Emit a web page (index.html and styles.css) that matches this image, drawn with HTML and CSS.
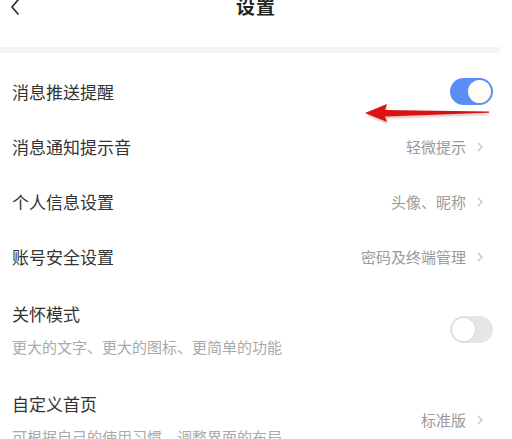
FILE: index.html
```html
<!DOCTYPE html>
<html lang="zh-CN">

<head>
    <meta charset="UTF-8">
    <meta name="viewport" content="width=device-width, initial-scale=1.0">
    <title>设置</title>
    <link rel="stylesheet" href="styles.css">
</head>

<body>
    <div class="page">
        <div class="header">
            <svg class="back" width="10" height="16" viewBox="0 0 10 16">
                <polyline points="8,1 2,8 8,15" fill="none" stroke="#333" stroke-width="1.8" stroke-linecap="round" stroke-linejoin="round"/>
            </svg>
            <div class="title">设置</div>
        </div>
        <div class="divider"></div>

        <div class="list">
            <div class="row">
                <div class="name">消息推送提醒</div>
                <div class="switch on"><span class="knob"></span></div>
            </div>
            <div class="row">
                <div class="name">消息通知提示音</div>
                <div class="value">轻微提示<svg class="arrow-r" width="6" height="10" viewBox="0 0 6 10"><polyline points="1,1 5,5 1,9" fill="none" stroke="#c4c4c4" stroke-width="1.4"/></svg></div>
            </div>
            <div class="row">
                <div class="name">个人信息设置</div>
                <div class="value">头像、昵称<svg class="arrow-r" width="6" height="10" viewBox="0 0 6 10"><polyline points="1,1 5,5 1,9" fill="none" stroke="#c4c4c4" stroke-width="1.4"/></svg></div>
            </div>
            <div class="row">
                <div class="name">账号安全设置</div>
                <div class="value">密码及终端管理<svg class="arrow-r" width="6" height="10" viewBox="0 0 6 10"><polyline points="1,1 5,5 1,9" fill="none" stroke="#c4c4c4" stroke-width="1.4"/></svg></div>
            </div>
            <div class="row tall">
                <div class="texts">
                    <div class="name">关怀模式</div>
                    <div class="desc">更大的文字、更大的图标、更简单的功能</div>
                </div>
                <div class="switch"><span class="knob"></span></div>
            </div>
            <div class="row tall">
                <div class="texts">
                    <div class="name">自定义首页</div>
                    <div class="desc">可根据自己的使用习惯，调整界面的布局</div>
                </div>
                <div class="value">标准版<svg class="arrow-r" width="6" height="10" viewBox="0 0 6 10"><polyline points="1,1 5,5 1,9" fill="none" stroke="#c4c4c4" stroke-width="1.4"/></svg></div>
            </div>
        </div>

        <!-- red annotation arrow drawn over the screenshot -->
        <svg class="mark" width="130" height="24" viewBox="0 0 130 24">
            <defs>
                <linearGradient id="shaft" x1="0" y1="0" x2="1" y2="0">
                    <stop offset="0" stop-color="#e01010"/>
                    <stop offset="1" stop-color="#c81818"/>
                </linearGradient>
            </defs>
            <path d="M2,12 L24,3 L22,9 L126,10.5 L126,11.8 L22,15.5 L24,21 Z" fill="url(#shaft)"/>
        </svg>
    </div>
</body>

</html>
```

FILE: styles.css
```css
body {
    margin: 0;
    background: #fff;
    font-family: "Noto Sans CJK SC", "Noto Sans", sans-serif;
    color: #333;
}

.page {
    position: relative;
    width: 512px;
    margin-top: -37px;
}

.header {
    height: 84px;
    display: flex;
    align-items: center;
    justify-content: center;
    position: relative;
}

.header .back {
    position: absolute;
    left: 10px;
    top: 36px;
}

.title {
    font-size: 19px;
    font-weight: 700;
    color: #222;
    letter-spacing: 1px;
}

.divider {
    width: 500px;
    height: 6px;
    background: #f4f4f4;
}

.list {
    padding-top: 11px;
}

.row {
    height: 55px;
    display: flex;
    align-items: center;
    justify-content: space-between;
    padding: 0 19px 0 12px;
}

.row.tall {
    height: auto;
    padding-top: 18px;
    padding-bottom: 17px;
}

.name {
    font-size: 17px;
    line-height: 24px;
    color: #333;
}

.desc {
    font-size: 15px;
    line-height: 20px;
    color: #aaa;
    margin-top: 11px;
    white-space: nowrap;
}

.value {
    display: flex;
    align-items: center;
    font-size: 15px;
    color: #9a9a9a;
    margin-right: 10px;
}

.arrow-r {
    margin-left: 11px;
}

.switch {
    width: 43px;
    height: 27px;
    border-radius: 14px;
    background: #e6e6e6;
    display: flex;
    align-items: center;
    padding: 0 2px;
    box-sizing: border-box;
}

.switch .knob {
    width: 23px;
    height: 23px;
    border-radius: 50%;
    background: #fff;
    box-shadow: 0 0 0 1px #d6d6d6;
}

.switch.on {
    background: #5b8ef2;
    justify-content: flex-end;
}

.switch.on .knob {
    background: #fffef6;
    box-shadow: none;
}

.mark {
    position: absolute;
    left: 363px;
    top: 138px;
    filter: drop-shadow(1px 2px 1px rgba(120, 0, 0, 0.25));
}
```
